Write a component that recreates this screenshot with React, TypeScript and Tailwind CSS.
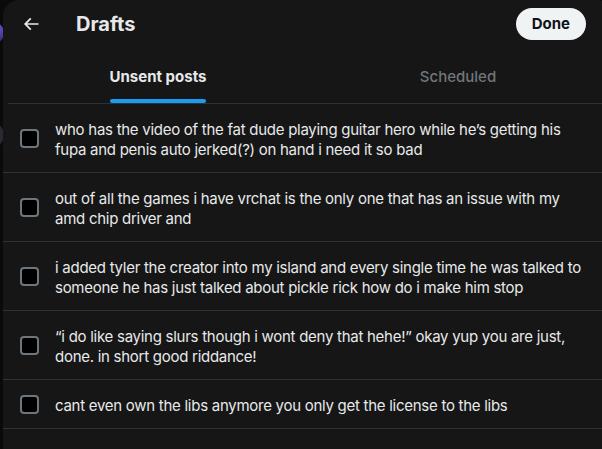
import React from "react";

const drafts = [
  "who has the video of the fat dude playing guitar hero while he\u2019s getting his fupa and penis auto jerked(?) on hand i need it so bad",
  "out of all the games i have vrchat is the only one that has an issue with my amd chip driver and",
  "i added tyler the creator into my island and every single time he was talked to someone he has just talked about pickle rick how do i make him stop",
  "\u201ci do like saying slurs though i wont deny that hehe!\u201d okay yup you are just, done. in short good riddance!",
  "cant even own the libs anymore you only get the license to the libs",
];

export default function App() {
  return (
    <div
      className="flex w-[602px] h-[449px] overflow-hidden bg-[#0a0a0a]"
      style={{ fontFamily: "Inter, 'Noto Sans', Roboto, sans-serif" }}
    >
      <div className="relative w-[3px] shrink-0 overflow-hidden bg-[#0a0a0a]">
        <div className="absolute left-[-18px] top-[22px] w-[22px] h-[22px] rounded-full bg-gradient-to-b from-[#3b5bd6] via-[#5a3fa8] to-[#1e2a55]" />
        <div className="absolute left-[-22px] top-[122px] w-[26px] h-[26px] rounded-full bg-[#2a2a30]" />
      </div>
      <div className="w-[610px] shrink-0 h-full bg-[#161616] rounded-t-[16px] text-[#e7e9ea] overflow-hidden">
        <div className="flex items-center h-[48px] pl-[16px] pr-[27px]">
          <div className="w-[20px] h-[20px] ml-[2px] flex items-center justify-center">
            <svg viewBox="0 0 24 24" className="w-[20px] h-[20px]" fill="#e7e9ea">
              <path d="M7.414 13l5.043 5.04-1.414 1.42L3.586 12l7.457-7.46 1.414 1.42L7.414 11H21v2H7.414z" />
            </svg>
          </div>
          <div className="ml-[35px] text-[20px] font-bold leading-[24px]">Drafts</div>
          <div className="flex-1" />
          <button className="h-[32px] px-[16px] rounded-full bg-[#eff3f4] text-[#0f1419] text-[15px] font-bold leading-[20px]">
            Done
          </button>
        </div>
        <div className="flex h-[56px] border-b border-[#2f3336] w-[600px] ml-[5px]">
          <div className="flex-1 flex justify-center">
            <div className="relative flex items-center pt-[2px] text-[15px] font-bold leading-[20px] text-[#e7e9ea]">
              Unsent posts
              <div className="absolute left-0 right-0 bottom-0 h-[4px] rounded-full bg-[#1d9bf0]" />
            </div>
          </div>
          <div className="flex-1 flex justify-center">
            <div className="flex items-center pt-[2px] text-[15px] font-medium leading-[20px] text-[#71767b]">
              Scheduled
            </div>
          </div>
        </div>
        <div>
          {drafts.map((t, i) => (
            <div key={i} className="flex items-center border-b border-[#2f3336] py-[12px] pl-[16px]">
              <div className="w-[20px] h-[20px] shrink-0 flex items-center justify-center">
                <div className="w-[19px] h-[19px] rounded-[4px] border-2 border-[#6e767d] bg-black" />
              </div>
              <div className="ml-[16px] w-[531px] pt-[4px] text-[15px] leading-[20px] tracking-[-0.27px]">{t}</div>
            </div>
          ))}
        </div>
      </div>
    </div>
  );
}
